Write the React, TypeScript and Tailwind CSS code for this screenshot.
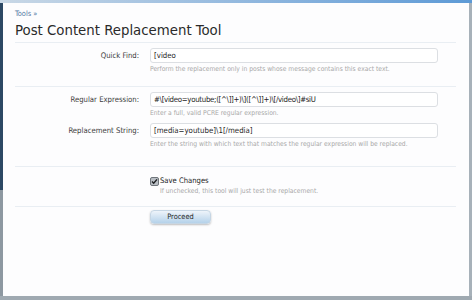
import React from "react";

const font = { fontFamily: '"DejaVu Sans Condensed", "DejaVu Sans", sans-serif' };

function Row({
  label,
  value,
  hint,
  top,
  valueClass = "",
}: {
  label: string;
  value: string;
  hint: string;
  top: string;
  valueClass?: string;
}) {
  return (
    <div className={`flex ${top}`}>
      <div className="w-[124px] shrink-0 flex justify-end h-[15px] items-center text-[7.7px] text-[#3c3c3c]">
        {label}
      </div>
      <div className="ml-[11px] flex flex-col">
        <div className={`w-[288px] h-[15px] rounded-[3px] border border-[#dcdfe3] bg-white flex items-center pl-[3px] text-[7.8px] text-[#1e1e1e] whitespace-nowrap ${valueClass}`}>
          {value}
        </div>
        <div className="mt-[1px] h-[10px] leading-[10px] text-[6.7px] text-[#a8a8a8] whitespace-nowrap">
          {hint}
        </div>
      </div>
    </div>
  );
}

export default function App() {
  return (
    <div className="w-[472px] h-[300px] flex flex-col bg-[#a3adb5] overflow-hidden" style={font}>
      <div className="h-[3px] bg-gradient-to-r from-[#c9d8e6] to-[#5d9ad6]" />
      <div className="flex flex-1 min-h-0">
        <div className="w-[3px] bg-[linear-gradient(to_bottom,#2c4864_0,#2c4864_187px,#8d98a1_187px)]" />
        <div className="flex-1 bg-[#fdfdfe] pl-[12px] pr-[13px] flex flex-col">
          <div className="mt-[6px] h-[10px] leading-[10px] text-[7.4px] text-[#4f76a2]">Tools »</div>
          <div className="mt-[1px] h-[20px] leading-[20px] text-[14.8px] text-[#2a2a2a] whitespace-nowrap">
            Post Content Replacement Tool
          </div>
          <div className="mt-[2px] border-t border-[#e9eef3]" />
          <Row
            top="pt-[5px]"
            label="Quick Find:"
            value="[video"
            hint="Perform the replacement only in posts whose message contains this exact text."
          />
          <div className="mt-[12px] border-t border-[#e9eef3]" />
          <Row
            top="pt-[5px]"
            label="Regular Expression:"
            value="#\[video=youtube;([^\]]+)\]([^\]]+)\[/video\]#siU"
            hint="Enter a full, valid PCRE regular expression."
            valueClass="tracking-[-0.3px]"
          />
          <Row
            top="pt-[5px]"
            label="Replacement String:"
            value="[media=youtube]\1[/media]"
            hint="Enter the string with which text that matches the regular expression will be replaced."
          />
          <div className="mt-[17px] border-t border-[#e9eef3]" />
          <div className="flex pt-[9px]">
            <div className="w-[124px] shrink-0" />
            <div className="ml-[11px] flex flex-col">
              <div className="flex items-center h-[10px]">
                <svg width="9" height="9" viewBox="0 0 9 9" className="mr-[1px]">
                  <rect x="0.5" y="0.5" width="8" height="8" rx="1.5" fill="#b9bec4" stroke="#6f757b" />
                  <path d="M2 4.6 L3.7 6.3 L7 2.4" fill="none" stroke="#1d1f22" strokeWidth="1.4" />
                </svg>
                <span className="text-[7.6px] text-[#222] leading-[10px]">Save Changes</span>
              </div>
              <div className="pl-[10px] h-[10px] leading-[10px] text-[6.7px] text-[#a8a8a8] whitespace-nowrap">
                If unchecked, this tool will just test the replacement.
              </div>
            </div>
          </div>
          <div className="mt-[10px] border-t border-[#e9eef3]" />
          <div className="flex pt-[3px]">
            <div className="w-[124px] shrink-0" />
            <div className="ml-[11px]">
              <div className="w-[61px] h-[14px] rounded-[4px] bg-gradient-to-b from-[#eef4fa] to-[#b5d2ea] border border-[#c6d6e4] shadow-[0_1px_2px_rgba(0,0,0,0.25)] flex items-center justify-center text-[7.4px] text-[#1c1c1c]">
                Proceed
              </div>
            </div>
          </div>
        </div>
        <div className="w-[3px] bg-[#a7b1b9]" />
      </div>
      <div className="h-[4px] bg-[#9fa9b1]" />
    </div>
  );
}
